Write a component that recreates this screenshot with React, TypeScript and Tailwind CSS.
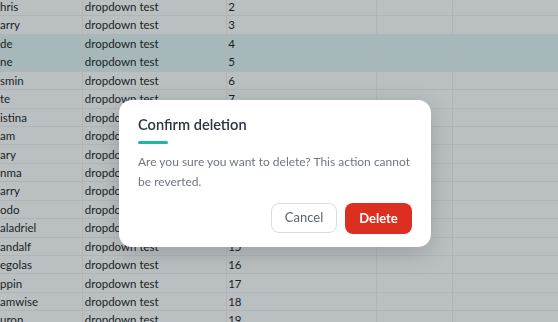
import React from 'react';

const ROWS = [
  { name: 'hris', n: 2 },
  { name: 'arry', n: 3 },
  { name: 'de', n: 4, selected: true },
  { name: 'ne', n: 5, selected: true },
  { name: 'smin', n: 6 },
  { name: 'te', n: 7 },
  { name: 'istina', n: 8 },
  { name: 'am', n: 9 },
  { name: 'ary', n: 10 },
  { name: 'nma', n: 11 },
  { name: 'arry', n: 12 },
  { name: 'odo', n: 13 },
  { name: 'aladriel', n: 14 },
  { name: 'andalf', n: 15 },
  { name: 'egolas', n: 16 },
  { name: 'ppin', n: 17 },
  { name: 'amwise', n: 18 },
  { name: 'uron', n: 19 },
];

const GridRow: React.FC<{ name: string; n: number; selected?: boolean }> = ({ name, n, selected }) => (
  <div
    className={`flex h-[18.44px] border-b border-[#f0f0f0] ${selected ? 'bg-[#e2f5f2]' : 'bg-white'}`}
  >
    <div className="w-[83.3px] shrink-0 border-r border-[#f0f0f0] flex items-center overflow-hidden whitespace-nowrap">{name}</div>
    <div className="w-[143.4px] shrink-0 border-r border-[#f0f0f0] flex items-center pl-[1.5px] whitespace-nowrap">dropdown test</div>
    <div className="w-[150px] shrink-0 border-r border-[#f0f0f0] flex items-center pl-[1.5px]">{n}</div>
    <div className="w-[76.6px] shrink-0 border-r border-[#f0f0f0]" />
    <div className="flex-1" />
  </div>
);

export default function App() {
  return (
    <div className="relative h-[322px] w-[558px] overflow-hidden bg-white font-['Lato',sans-serif] text-[11.5px] text-[#1a1a1a]">
      <div className="-mt-[2.1px] flex flex-col">
        {ROWS.map((r, i) => (
          <GridRow key={i} {...r} />
        ))}
      </div>

      <div className="fixed inset-0 bg-[rgba(25,42,52,0.3)] flex items-start pl-[119px] pt-[100px]">
        <div className="w-[312px] rounded-[13px] bg-white px-[19px] pt-[15px] pb-[13px] shadow-[0_6px_24px_rgba(0,0,0,0.18)] font-['Lato',sans-serif]">
          <h2 className="text-[14.6px] leading-[20px] font-semibold text-[#2d3340]">Confirm deletion</h2>
          <div className="mt-[6px] h-[3px] w-[30px] rounded-full bg-[#1cb9a0]" />
          <p className="mt-[8px] text-[12px] leading-[19.5px] text-[#6f7680]">
            Are you sure you want to delete? This action cannot be reverted.
          </p>
          <div className="mt-[12px] flex justify-end gap-[8px]">
            <button className="h-[30px] w-[66px] rounded-[8px] border border-[#d9dce0] bg-white text-[13px] text-[#5b6370]">
              Cancel
            </button>
            <button className="h-[31px] w-[67px] rounded-[8px] bg-[#dc2f22] text-[13px] font-bold text-white">
              Delete
            </button>
          </div>
        </div>
      </div>
    </div>
  );
}
